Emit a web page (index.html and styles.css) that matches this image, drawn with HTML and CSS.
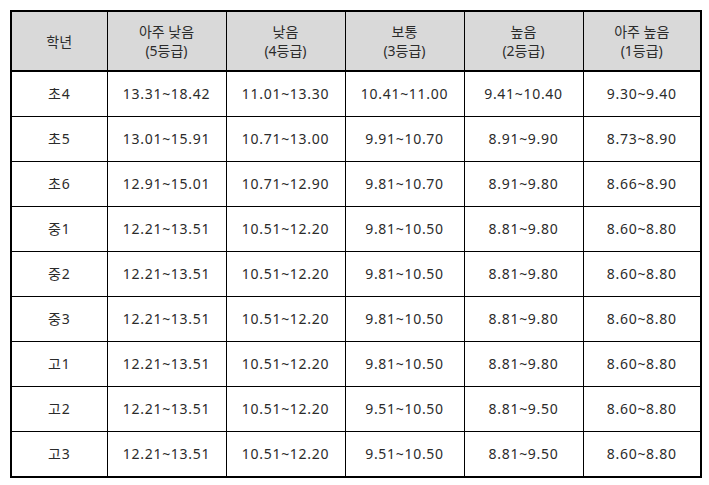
FILE: index.html
```html
<!DOCTYPE html>
<html lang="ko">
<head>
<meta charset="utf-8">
<link rel="stylesheet" href="styles.css">
</head>
<body>
<div class="wrap">
<table class="grade">
<colgroup>
<col class="c-first"><col class="c-mid"><col class="c-mid"><col class="c-mid"><col class="c-mid"><col class="c-last">
</colgroup>
<thead>
<tr><th>학년</th><th>아주 낮음<br>(5등급)</th><th>낮음<br>(4등급)</th><th>보통<br>(3등급)</th><th>높음<br>(2등급)</th><th>아주 높음<br>(1등급)</th></tr>
</thead>
<tbody>
<tr><td>초4</td><td>13.31~18.42</td><td>11.01~13.30</td><td>10.41~11.00</td><td>9.41~10.40</td><td>9.30~9.40</td></tr>
<tr><td>초5</td><td>13.01~15.91</td><td>10.71~13.00</td><td>9.91~10.70</td><td>8.91~9.90</td><td>8.73~8.90</td></tr>
<tr><td>초6</td><td>12.91~15.01</td><td>10.71~12.90</td><td>9.81~10.70</td><td>8.91~9.80</td><td>8.66~8.90</td></tr>
<tr><td>중1</td><td>12.21~13.51</td><td>10.51~12.20</td><td>9.81~10.50</td><td>8.81~9.80</td><td>8.60~8.80</td></tr>
<tr><td>중2</td><td>12.21~13.51</td><td>10.51~12.20</td><td>9.81~10.50</td><td>8.81~9.80</td><td>8.60~8.80</td></tr>
<tr><td>중3</td><td>12.21~13.51</td><td>10.51~12.20</td><td>9.81~10.50</td><td>8.81~9.80</td><td>8.60~8.80</td></tr>
<tr><td>고1</td><td>12.21~13.51</td><td>10.51~12.20</td><td>9.81~10.50</td><td>8.81~9.80</td><td>8.60~8.80</td></tr>
<tr><td>고2</td><td>12.21~13.51</td><td>10.51~12.20</td><td>9.51~10.50</td><td>8.81~9.50</td><td>8.60~8.80</td></tr>
<tr><td>고3</td><td>12.21~13.51</td><td>10.51~12.20</td><td>9.51~10.50</td><td>8.81~9.50</td><td>8.60~8.80</td></tr>
</tbody>
</table>
</div>
</body>
</html>
```

FILE: styles.css
```css
html, body {
  margin: 0;
  padding: 0;
  background: #ffffff;
}
body {
  padding: 10px 0 0 10px;
  font-family: "Noto Sans", "Noto Sans CJK KR", sans-serif;
  font-size: 14px;
  color: #2b2b2b;
}
.wrap {
  width: 688px;
  border: 2px solid #000000;
}
.grade {
  width: 688px;
  border-collapse: collapse;
  table-layout: fixed;
}
.c-first { width: 95px; }
.c-mid { width: 119px; }
.c-last { width: 117px; }
.grade th, .grade td {
  padding: 0;
  text-align: center;
  vertical-align: middle;
  border-right: 1px solid #000000;
  border-bottom: 1px solid #000000;
}
.grade th:last-child, .grade td:last-child {
  border-right: none;
}
.grade tbody tr:last-child td {
  border-bottom: none;
}
.grade th {
  background: #d9d9d9;
  font-weight: normal;
  height: 58px;
  line-height: 19px;
  border-bottom: 2px solid #000000;
}
.grade td {
  height: 44px;
  line-height: 20px;
  letter-spacing: 0.7px;
}
```
